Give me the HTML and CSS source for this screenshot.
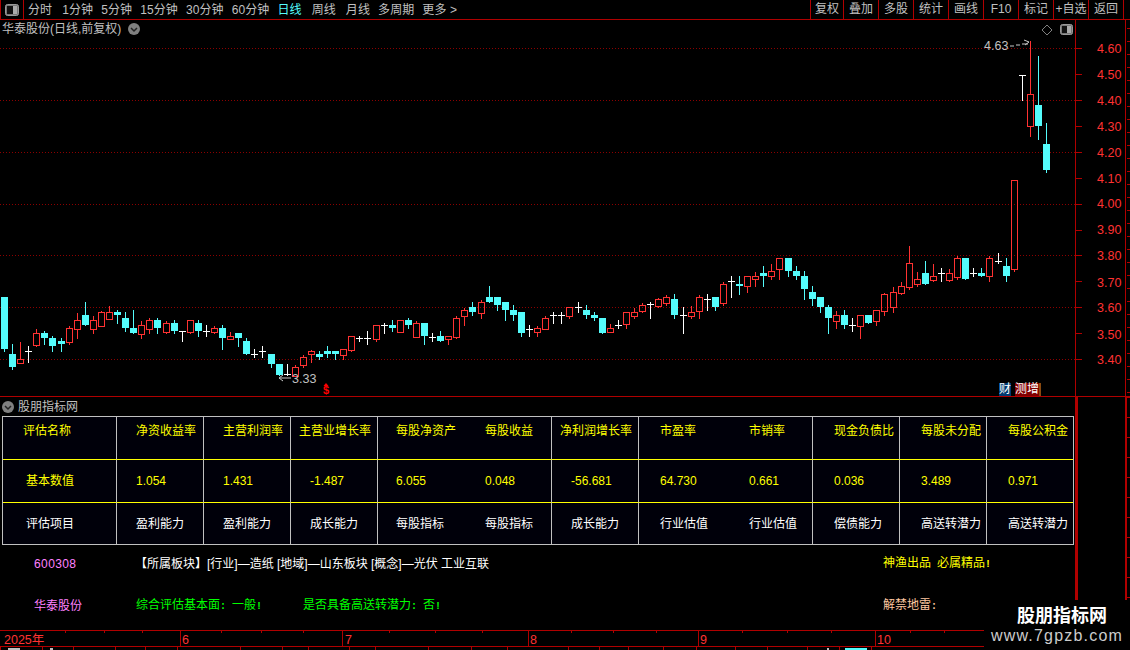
FILE: index.html
```html
<!DOCTYPE html>
<html lang="zh-CN">
<head>
<meta charset="utf-8">
<title>华泰股份</title>
<link rel="stylesheet" href="styles.css">
</head>
<body>
<div class="page">
  <header class="topbar">
    <div class="panebtn">
      <svg width="14" height="12" viewBox="0 0 14 12"><rect x="0.5" y="0.5" width="13" height="11" rx="2" fill="#777" stroke="#999"/><rect x="2" y="2" width="6" height="8" fill="#111"/><rect x="8" y="2" width="4" height="8" fill="#aaa"/></svg>
    </div>
    <nav class="tabs">
      <span>分时</span><span class="w">1分钟</span><span>5分钟</span><span>15分钟</span><span>30分钟</span><span>60分钟</span><span class="on">日线</span><span class="w">周线</span><span class="w">月线</span><span>多周期</span><span>更多 &gt;</span>
    </nav>
    <nav class="tools">
      <span class="t33">复权</span><span>叠加</span><span>多股</span><span>统计</span><span>画线</span><span>F10</span><span>标记</span><span>+自选</span><span>返回</span>
    </nav>
  </header>

  <section class="chart">
    <svg id="kline" class="kline" width="1130" height="376" viewBox="0 20 1130 376" xmlns="http://www.w3.org/2000/svg">
      <g id="grid"></g>
      <g id="candles"></g>
      <g class="prices">
        <text x="1097" y="53">4.60</text><text x="1097" y="79">4.50</text><text x="1097" y="105">4.40</text><text x="1097" y="131">4.30</text><text x="1097" y="157">4.20</text><text x="1097" y="183">4.10</text><text x="1097" y="208">4.00</text><text x="1097" y="234">3.90</text><text x="1097" y="260">3.80</text><text x="1097" y="287">3.70</text><text x="1097" y="312">3.60</text><text x="1097" y="339">3.50</text><text x="1097" y="364">3.40</text>
      </g>
      <text class="mark" x="984" y="50">4.63</text>
      <path class="arrow" d="M1010 46H1014M1016 45H1020M1022 44H1028M1024 40L1029 42L1025 45"/>
      <text class="mark" x="292" y="383">3.33</text>
      <path class="arrow" d="M291 378H279M283 375L279 378L283 381"/>
      <text class="dollar" x="323" y="393.500">$</text>
      <path class="hat" d="M326 383L323.500 386H328.500Z"/>
      <path class="diamond" d="M1047 25L1052 30L1047 35L1042 30Z"/>
      <rect x="1060.500" y="24.500" width="12" height="10" rx="2" fill="#777" stroke="#999"/>
      <rect x="1062" y="26" width="5" height="7" fill="#111"/>
      <rect x="1067" y="26" width="4" height="7" fill="#aaa"/>
    </svg>
    <div class="title">
      <span>华泰股份(日线,前复权)</span>
      <svg width="12" height="12" viewBox="0 0 12 12"><circle cx="6" cy="6" r="6" fill="#808080"/><path d="M3 5L6 8L9 5" fill="none" stroke="#222" stroke-width="1.500"/></svg>
    </div>
    <div class="badges">
      <span class="b-blue">财</span><span class="b-gap"></span><span class="b-red">测</span><span class="b-red">增</span><span class="b-brown"></span>
    </div>
  </section>

  <div class="lower">
    <main class="panel">
      <div class="panelhead">
        <svg width="12" height="12" viewBox="0 0 12 12"><circle cx="6" cy="6" r="6" fill="#808080"/><path d="M3 5L6 8L9 5" fill="none" stroke="#222" stroke-width="1.500"/></svg>
        <span>股朋指标网</span>
      </div>
      <table class="metrics">
        <colgroup><col class="c0"><col span="11" class="cn"></colgroup>
        <tr class="r1">
          <td>评估名称</td><td>净资收益率</td><td>主营利润率</td><td class="six">主营业增长率</td><td>每股净资产</td><td class="nb">每股收益</td><td class="six">净利润增长率</td><td>市盈率</td><td class="nb">市销率</td><td>现金负债比</td><td>每股未分配</td><td>每股公积金</td>
        </tr>
        <tr class="r2">
          <td class="ind">基本数值</td><td>1.054</td><td>1.431</td><td>-1.487</td><td>6.055</td><td class="nb">0.048</td><td>-56.681</td><td>64.730</td><td class="nb">0.661</td><td>0.036</td><td>3.489</td><td>0.971</td>
        </tr>
        <tr class="r3">
          <td class="ind">评估项目</td><td>盈利能力</td><td>盈利能力</td><td>成长能力</td><td>每股指标</td><td class="nb">每股指标</td><td>成长能力</td><td>行业估值</td><td class="nb">行业估值</td><td>偿债能力</td><td>高送转潜力</td><td>高送转潜力</td>
        </tr>
      </table>
      <div class="info">
        <span class="pink num">600308</span>
        <span class="sector">【所属板块】[行业]—造纸 [地域]—山东板块 [概念]—光伏 工业互联</span>
        <span class="gold">神渔出品<b class="p"> </b>必属精品<b class="p">!</b></span>
        <span class="pink">华泰股份</span>
        <span class="green">综合评估基本面<b class="p">: </b>一般<b class="p">!</b></span>
        <span class="green">是否具备高送转潜力<b class="p">: </b>否<b class="p">!</b></span>
        <span class="peach">解禁地雷<b class="p">:</b></span>
      </div>
    </main>
    <aside class="strip"></aside>
    <div class="stripticks"></div>
  </div>

  <svg id="axis" class="timeaxis" width="1130" height="20" viewBox="0 630 1130 20" xmlns="http://www.w3.org/2000/svg">
    <g id="axislines"></g>
    <g class="dates">
      <text x="4" y="644">2025年</text><text x="182" y="644">6</text><text x="345" y="644">7</text><text x="530" y="644">8</text><text x="700" y="644">9</text><text x="877" y="644">10</text>
    </g>
  </svg>

  <aside class="watermark">
    <strong>股朋指标网</strong>
    <span>www.7gpzb.com</span>
  </aside>
</div>
<script src="chart.js"></script>
</body>
</html>
```
FILE: styles.css
```css
* { box-sizing: border-box; }
html, body { margin: 0; padding: 0; background: #000; }
body {
  font-family: "Liberation Sans", "Noto Sans CJK SC", sans-serif;
  font-size: 12px;
  line-height: 14px;
  color: #c0c0c0;
  overflow: hidden;
}
.page { position: relative; width: 1130px; height: 650px; overflow: hidden; background: #000; }

/* top toolbar */
.topbar { display: flex; height: 20px; border-bottom: 1px solid #b00000; }
.panebtn { width: 24px; display: flex; align-items: center; justify-content: center; border: 1px solid #b00000; border-width: 0 1px 0 1px; }
.tabs { display: flex; align-items: center; gap: 8px; padding-left: 4px; }
.tabs span { white-space: nowrap; letter-spacing: 0.100px; }
.tabs .w { margin-left: 2px; }
.tabs .on { color: #54fcfc; }
.tools { display: flex; margin-left: auto; margin-right: 6px; }
.tools span { width: 35px; text-align: center; border-left: 1px solid #b00000; line-height: 19px; white-space: nowrap; }
.tools .t33 { width: 33px; }
.tools span:last-child { border-right: 1px solid #b00000; width: 36px; }

/* price chart */
.chart { position: relative; height: 376px; }
.kline { display: block; }
.title { position: absolute; left: 2px; top: 2px; display: flex; align-items: center; gap: 7px; }
.prices text { fill: #ff3232; font-size: 12.500px; }
.mark { fill: #c0c0c0; font-size: 12.500px; }
.arrow { fill: none; stroke: #c8c8c8; stroke-width: 1; }
.dollar { fill: #f00; font-size: 11px; font-weight: bold; }
.hat { fill: #f00; }
.diamond { fill: none; stroke: #808080; stroke-width: 1; }
.badges { position: absolute; left: 999px; top: 363px; display: flex; height: 13px; color: #fff; line-height: 13px; }
.badges span { display: block; width: 12px; text-align: center; }
.b-blue { background: #003a70; }
.badges .b-gap { width: 4px; }
.b-red { background: #800000; }
.badges .b-brown { background: #8a4a10; width: 2px; }

/* lower pane */
.lower { display: flex; height: 234px; border-top: 1px solid #b00000; }
.panel { width: 1075px; flex: none; }
.panelhead { display: flex; align-items: center; gap: 4px; height: 19px; padding: 0 0 0 2px; font-size: 12px; }
.metrics { display: table; margin-left: 2px; table-layout: fixed; width: 1072px; height: 129px; border-collapse: separate; border-spacing: 0; background: #00000a; border: 1px solid #c0c0c0; }
.c0 { width: 113px; }
.cn { width: 87px; }
.metrics td { border-left: 1px solid #c0c0c0; padding: 0 0 0 19px; white-space: nowrap; overflow: hidden; }
.metrics td:first-child { padding-left: 20px; border-left: none; }
.metrics td.ind { padding-left: 23px; }
.metrics td.six { padding-left: 8px; }
.metrics td:nth-child(5) { padding-left: 18px; }
.metrics td:nth-child(6) { padding-left: 21px; }
.metrics td:nth-child(8) { padding-left: 21px; }
.metrics td:nth-child(9) { padding-left: 24px; }
.metrics td:nth-child(n+10) { padding-left: 21px; }
.metrics td.nb { border-left: none; }
.r1 td { color: #ff0; vertical-align: top; padding-top: 7px; height: 43px; border-bottom: 1px solid #ff0; }
.r2 td { color: #ff0; border-bottom: 1px solid #ff0; height: 43px; }
.r3 td { color: #fff; height: 41px; }

.info { display: grid; grid-template-columns: 136px 167px 580px 1fr; grid-template-rows: 36px 48px; align-items: center; padding-top: 1px; }
.info > span { white-space: pre; }
.num { padding-left: 34px; letter-spacing: 0.400px; }
.pink { color: #ff80ff; padding-left: 34px; }
.sector { color: #fff; grid-column: 2 / 4; margin-left: -1px; }
.gold { color: #ff0; grid-column: 4; }
.green { color: #0f0; }
.peach { color: #ffc8a0; }
.p { font-family: "Liberation Mono", monospace; font-size: 10px; font-weight: bold; }

.strip { width: 52px; flex: none; border-left: 3px solid #b00000; border-right: 2px solid #b00000; }
.stripticks { width: 3px; flex: none; background: repeating-linear-gradient(#b00000 0 1px, transparent 1px 20px); }

/* time axis */
.timeaxis { display: block; }
.dates text { fill: #ff3232; font-size: 12.500px; }

.watermark { position: absolute; left: 984px; top: 600px; width: 146px; height: 50px; background: #000; display: flex; flex-direction: column; align-items: center; }
.watermark strong { margin: 3px 0 0 10px; font-size: 18px; line-height: 22px; color: #fff; font-family: "Noto Sans CJK SC", sans-serif; }
.watermark span { margin-top: 2px; font-size: 16px; line-height: 18px; letter-spacing: 1.200px; color: #ccc; }
```
FILE: chart.js
```js
// Candles: type, body top, body bottom, wick top, wick bottom (pixel rows of the price pane)
var data = "c 297 349 297 351,c 354 367 344 369,r 359 363 342 363,w 351 351 346 362,r 333 345 329 346,c 333 338 331 344,c 338 346 336 351,c 341 344 338 351,r 328 342 326 344,r 320 329 313 338,c 315 325 302 325,r 320 329 316 333,r 312 326 311 326,r 312 319 306 319,c 312 315 310 323,c 318 328 312 331,c 328 333 310 333,r 325 334 321 338,r 320 329 318 333,c 320 328 318 333,r 323 332 321 333,c 323 331 320 333,w 331 331 331 341,r 320 332 320 333,c 323 331 320 336,w 331 331 325 336,r 328 332 326 333,c 328 338 325 349,r 336 339 332 339,c 333 338 333 346,c 341 354 338 354,w 354 354 349 357,w 351 351 346 357,c 354 364 354 367,c 364 375 364 375,w 374 374 364 375,r 367 376 365 376,r 357 365 355 367,r 351 354 350 362,c 354 357 351 359,c 351 354 346 357,c 351 354 351 359,r 349 355 349 359,r 336 350 336 351,w 338 338 336 341,w 338 338 331 344,r 325 339 325 341,w 325 325 323 333,c 325 328 320 331,r 320 332 320 332,c 320 325 318 328,r 323 337 321 337,c 323 336 323 344,w 337 337 333 341,c 336 341 331 341,r 336 339 336 344,r 318 337 316 338,r 310 316 308 325,c 307 312 302 315,r 302 313 300 318,c 297 302 286 302,c 297 305 297 310,c 302 310 302 320,c 310 315 305 320,c 312 333 312 336,w 329 329 325 336,r 328 332 326 336,r 318 329 316 329,w 315 315 312 323,w 315 315 312 323,r 307 316 307 318,w 307 307 302 312,c 310 315 305 318,c 315 318 312 320,c 318 333 318 333,r 328 332 324 332,w 325 325 320 328,r 312 324 312 328,r 312 316 308 318,r 305 311 303 312,w 304 304 302 318,r 299 306 298 307,r 297 303 295 305,c 299 315 294 318,w 315 315 307 333,r 312 316 306 318,r 297 311 295 318,w 299 299 294 310,c 297 307 297 310,r 284 303 282 305,w 281 281 276 297,c 284 286 276 294,r 276 286 276 292,r 276 279 272 286,c 273 276 266 286,r 271 276 264 279,r 258 269 258 279,c 258 271 258 276,c 271 276 266 279,c 276 289 271 299,c 292 299 286 305,c 297 307 297 312,c 307 318 305 333,r 315 321 311 328,c 315 325 310 328,w 325 325 318 331,r 315 326 315 338,c 315 323 315 323,r 310 321 310 325,r 294 311 293 315,r 292 307 287 312,r 286 293 282 294,r 263 287 246 289,r 279 284 272 286,c 273 284 261 284,r 276 280 264 281,w 273 273 268 281,r 273 280 269 281,r 258 277 256 279,c 258 279 258 279,w 273 273 268 276,c 273 276 268 276,r 258 276 256 281,w 261 261 253 263,c 266 276 258 281,r 180 269 180 271,w 75 75 75 100,r 94 126 41 136,c 105 126 56 139,c 144 170 123 172";

var NS = "http://www.w3.org/2000/svg";
var COLORS = { c: "#54fcfc", r: "#ff3232", w: "#ffffff" };
var AXIS = "#b00000";

function add(parent, name, attrs) {
  var el = document.createElementNS(NS, name);
  for (var k in attrs) el.setAttribute(k, attrs[k]);
  el.setAttribute("shape-rendering", "crispEdges");
  parent.appendChild(el);
  return el;
}
function fillRect(parent, x, y, w, h, color) {
  add(parent, "rect", { x: x, y: y, width: w, height: h, fill: color });
}

var candles = document.getElementById("candles");
data.split(",").forEach(function (row, i) {
  var p = row.split(" ");
  var t = p[0], top = +p[1], bot = +p[2], wt = +p[3], wb = +p[4];
  var c = Math.floor(4.5 + i * 8.0775);
  var color = COLORS[t];
  if (t === "w") {
    fillRect(candles, c, wt, 1, wb - wt + 1, color);
    fillRect(candles, c - 3, top, 7, 1, color);
  } else if (t === "c") {
    fillRect(candles, c, wt, 1, wb - wt + 1, color);
    fillRect(candles, c - 3, top, 7, bot - top, color);
  } else {
    if (wt < top) fillRect(candles, c, wt, 1, top - wt, color);
    if (wb > bot) fillRect(candles, c, bot, 1, wb - bot + 1, color);
    add(candles, "rect", { x: c - 2.5, y: top + 0.5, width: 6, height: bot - top, fill: "none", stroke: color });
  }
});

var grid = document.getElementById("grid");
[48, 100, 152, 204, 255, 307, 359].forEach(function (y) {
  add(grid, "line", { x1: 0, x2: 1075, y1: y + 0.5, y2: y + 0.5, stroke: "#8c0000", "stroke-dasharray": "1 2" });
});
fillRect(grid, 1075, 20, 1, 376, AXIS);
fillRect(grid, 1125, 20, 1, 376, AXIS);
[48, 74, 100, 126, 152, 178, 204, 230, 255, 281, 307, 333, 359].forEach(function (y) {
  fillRect(grid, 1076, y, 6, 1, AXIS);
});
for (var y = 28; y < 396; y += 13) {
  fillRect(grid, 1127, y, 3, 1, AXIS);
}

var ax = document.getElementById("axislines");
fillRect(ax, 0, 630, 984, 1, AXIS);
fillRect(ax, 0, 646, 984, 1, AXIS);
[65, 104, 142, 221, 261, 303, 389, 435, 482, 571, 613, 656, 742, 787, 831, 910, 944].forEach(function (x) {
  fillRect(ax, x, 631, 1, 2, AXIS);
});
[180, 342, 528, 698, 875].forEach(function (x) {
  fillRect(ax, x, 631, 1, 15, AXIS);
});
[0, 42, 73, 115, 145, 177, 240, 282, 308, 349, 375, 428, 471, 507, 568, 599, 628, 663, 696, 735, 767, 807, 839, 871].forEach(function (x) {
  fillRect(ax, x, 647, 1, 3, AXIS);
});
fillRect(ax, 8, 648, 12, 2, "#c0c0c0");
fillRect(ax, 50, 648, 3, 2, "#c0c0c0");
fillRect(ax, 827, 648, 2, 2, "#c0c0c0");
fillRect(ax, 845, 648, 22, 2, "#54fcfc");
```
